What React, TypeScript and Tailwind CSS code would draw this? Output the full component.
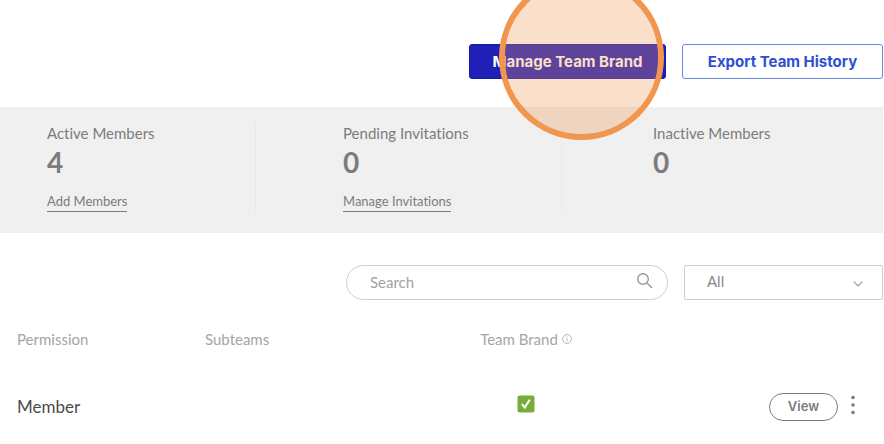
import React, { useState } from 'react';

const stats = [
  { label: 'Active Members', count: 4, action: 'Add Members', cell: 'pl-[47px]' },
  { label: 'Pending Invitations', count: 0, action: 'Manage Invitations', cell: 'pl-[87px] border-l border-[#e9e9e9]' },
  { label: 'Inactive Members', count: 0, action: '', cell: 'pl-[91px] border-l border-[#e9e9e9]' },
];

export default function TeamMembers() {
  const [search, setSearch] = useState('');
  const [filter, setFilter] = useState('all');

  return (
    <main className="overflow-hidden bg-white pr-px pb-3 font-['Lato',sans-serif] text-[#7c7c7c] [font-variant-ligatures:none]">
      <div className="flex justify-end gap-4 pt-11 pb-7 font-['Inter',sans-serif] text-[15px] leading-5 font-bold">
        <div className="relative">
          <button type="button" className="h-[35px] w-[197px] rounded-[3px] border border-[#1a1aa8] bg-[#2020b9] text-white">
            Manage Team Brand
          </button>
          {/* click highlight */}
          <span className="pointer-events-none absolute -top-[69px] left-[30px] size-[165px] rounded-full border-6 border-[#f0964f] bg-[#ee9452]/30 bg-clip-padding" />
        </div>
        <button type="button" className="h-[35px] w-[201px] rounded-[3px] border border-[#6b86de] bg-white text-[#2f4fd3]">
          Export Team History
        </button>
      </div>

      <section className="grid grid-cols-[255fr_306fr_322fr] bg-[#f0f0f0] pt-4 pb-[21px]">
        {stats.map((stat) => (
          <div key={stat.label} className={stat.cell}>
            <p className="text-[15px] leading-5">{stat.label}</p>
            <p className="text-[28px] leading-[38px] font-bold">{stat.count}</p>
            {stat.action && (
              <a href="#" className="mt-[10px] inline-block border-b border-[#7c7c7c] text-[13px] leading-5">
                {stat.action}
              </a>
            )}
          </div>
        ))}
      </section>

      <div className="flex justify-end gap-4 pt-8 text-[15px]">
        <label className="flex h-[35px] w-[322px] items-center rounded-full border border-[#cecece] pr-[14px] pl-[23px]">
          <input
            type="text"
            aria-label="Search"
            placeholder="Search"
            value={search}
            onChange={(e) => setSearch(e.target.value)}
            className="min-w-0 flex-1 outline-none placeholder:text-[#a2a2a2]"
          />
          <svg className="mb-1 size-[17px]" viewBox="0 0 17 17" fill="none" stroke="#999" strokeWidth="1.4" strokeLinecap="round">
            <circle cx="7" cy="7" r="5.3" />
            <path d="M11 11l4.6 4.6" />
          </svg>
        </label>
        <div className="relative">
          <select
            aria-label="Filter members"
            value={filter}
            onChange={(e) => setFilter(e.target.value)}
            className="h-[35px] w-[199px] appearance-none rounded-[2px] border border-[#cecece] bg-white pb-0.5 pl-[22px] text-[#888]"
          >
            <option value="all">All</option>
            <option value="member">Member</option>
          </select>
          <svg className="pointer-events-none absolute top-4 right-5 h-[6px] w-[10px]" viewBox="0 0 10 6" fill="none" stroke="#999" strokeWidth="1.2">
            <path d="M.7.7L5 5 9.3.7" />
          </svg>
        </div>
      </div>

      <table className="mt-[29px] w-full table-fixed text-left">
        <thead>
          <tr className="text-[15px] leading-5 text-[#a5a5a5]">
            <th className="w-[205px] pb-11 pl-[17px] font-normal">Permission</th>
            <th className="w-[255px] pb-11 font-normal">Subteams</th>
            <th className="w-[132px] pb-11 text-center font-normal">
              <span className="inline-flex items-center gap-1">
                Team Brand
                <svg className="size-[10px]" viewBox="0 0 10 10" fill="none" stroke="#a5a5a5" strokeWidth=".8">
                  <circle cx="5" cy="5" r="4.4" />
                  <path d="M5 4.3v3.2M5 2.4v1" />
                </svg>
              </span>
            </th>
            <th aria-label="Actions" />
          </tr>
        </thead>
        <tbody>
          <tr className="align-middle">
            <td className="pl-[17px] text-[17px] text-[#4b4b4b]">Member</td>
            <td />
            <td>
              <svg role="img" aria-label="Enabled" className="mx-auto mb-1.5 size-[18px]" viewBox="0 0 18 18">
                <rect x=".5" y=".5" width="17" height="17" rx="2" fill="#78ac3c" />
                <path d="M5.4 9.6l2.3 2.9L12.3 5.4" fill="none" stroke="#fff" strokeWidth="2" strokeLinecap="round" />
              </svg>
            </td>
            <td>
              <div className="flex items-center justify-end gap-[11px] pr-[26px]">
                <button type="button" className="h-7 w-[69px] rounded-full border border-[#7c7c7c] font-['Inter',sans-serif] text-[13px] font-semibold">
                  View
                </button>
                <button type="button" aria-label="More options" className="mb-1">
                  <svg className="h-5 w-[8px]" viewBox="0 0 8 20" fill="#7c7c7c">
                    <circle cx="4" cy="2.5" r="1.8" />
                    <circle cx="4" cy="10" r="1.8" />
                    <circle cx="4" cy="17.5" r="1.8" />
                  </svg>
                </button>
              </div>
            </td>
          </tr>
        </tbody>
      </table>
    </main>
  );
}
